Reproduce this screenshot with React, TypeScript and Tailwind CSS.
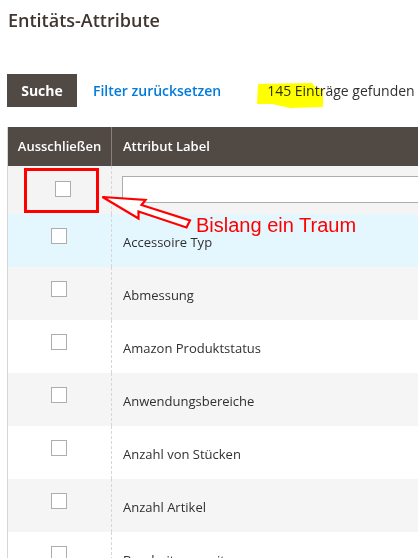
const rows = [
  { label: 'Accessoire Typ', bg: 'bg-[#e5f7fe]' },
  { label: 'Abmessung', bg: 'bg-[#f5f5f5]' },
  { label: 'Amazon Produktstatus', bg: 'bg-white' },
  { label: 'Anwendungsbereiche', bg: 'bg-[#f5f5f5]' },
  { label: 'Anzahl von Stücken', bg: 'bg-white' },
  { label: 'Anzahl Artikel', bg: 'bg-[#f5f5f5]' },
  { label: 'Bearbeitungszeit', bg: 'bg-white' },
];

function Box() {
  return <div className="w-4 h-4 border border-[#adadad] bg-white" />;
}

export default function App() {
  return (
    <div className="relative w-[418px] h-[558px] overflow-hidden bg-white font-['Open_Sans',sans-serif] text-[#303030]">
      <h1 className="pl-2 pt-[6px] text-[18px] font-semibold text-[#41362f] leading-[28px]">Entitäts-Attribute</h1>

      <div className="flex items-center mt-[40px] pl-[7px] h-[33px]">
        <button className="h-[33px] w-[70px] bg-[#514943] text-white font-bold text-[14px]">Suche</button>
        <span className="ml-4 text-[14px] font-semibold text-[#007bdb]">Filter zurücksetzen</span>
        <span className="ml-[46px] text-[14px] whitespace-nowrap">145 Einträge gefunden</span>
      </div>

      <div className="ml-[7px] mt-[20px] w-[500px] border-l border-[#d6d6d6]">
        <div className="flex h-[39px] bg-[#514943] text-white text-[13px] font-semibold">
          <div className="w-[104px] flex items-center justify-center border-r border-[#8a817c]">Ausschließen</div>
          <div className="flex-1 flex items-center pl-[11px]">Attribut Label</div>
        </div>
        <div className="flex h-[48px] bg-[#f4f4f4]">
          <div className="w-[104px] flex justify-center pt-[15px] pl-[6px] border-r border-dashed border-[#d6d6d6]">
            <Box />
          </div>
          <div className="flex-1 pl-[10px] pt-[10px]">
            <div className="h-[27px] w-full border border-[#adadad] bg-white" />
          </div>
        </div>
        {rows.map((r) => (
          <div key={r.label} className={`flex h-[53px] ${r.bg}`}>
            <div className="w-[104px] flex justify-center pt-[14px] pr-[2px] border-r border-dashed border-[#d6d6d6]">
              <Box />
            </div>
            <div className="flex-1 pl-[11px] pt-[19px] text-[13px] leading-[18px]">{r.label}</div>
          </div>
        ))}
      </div>

      {/* annotations */}
      <svg className="absolute left-[250px] top-[80px] mix-blend-multiply" width="80" height="30" viewBox="0 0 80 30">
        <path d="M8 4 L62 3 L66 8 L73 9 L73 27 L40 28 L22 24 L7 24 Z" fill="#ffff00" />
      </svg>
      <div className="absolute left-[24px] top-[168px] w-[75px] h-[45px] border-[3px] border-[#ff0000]" />
      <svg className="absolute left-0 top-0" width="418" height="558" viewBox="0 0 418 558">
        <path
          d="M102.5 197 L145.5 200 L141.5 205 L190 220.5 L186.5 227.5 L138.5 211.5 L138.5 218.5 Z"
          fill="white"
          stroke="#ff0000"
          strokeWidth="2.2"
          strokeLinejoin="miter"
        />
      </svg>
      <span className="absolute left-[196px] top-[213px] text-[20px] leading-[24px] text-[#ff0000] font-['Liberation_Sans',Arial,sans-serif] whitespace-nowrap">
        Bislang ein Traum
      </span>
    </div>
  );
}
